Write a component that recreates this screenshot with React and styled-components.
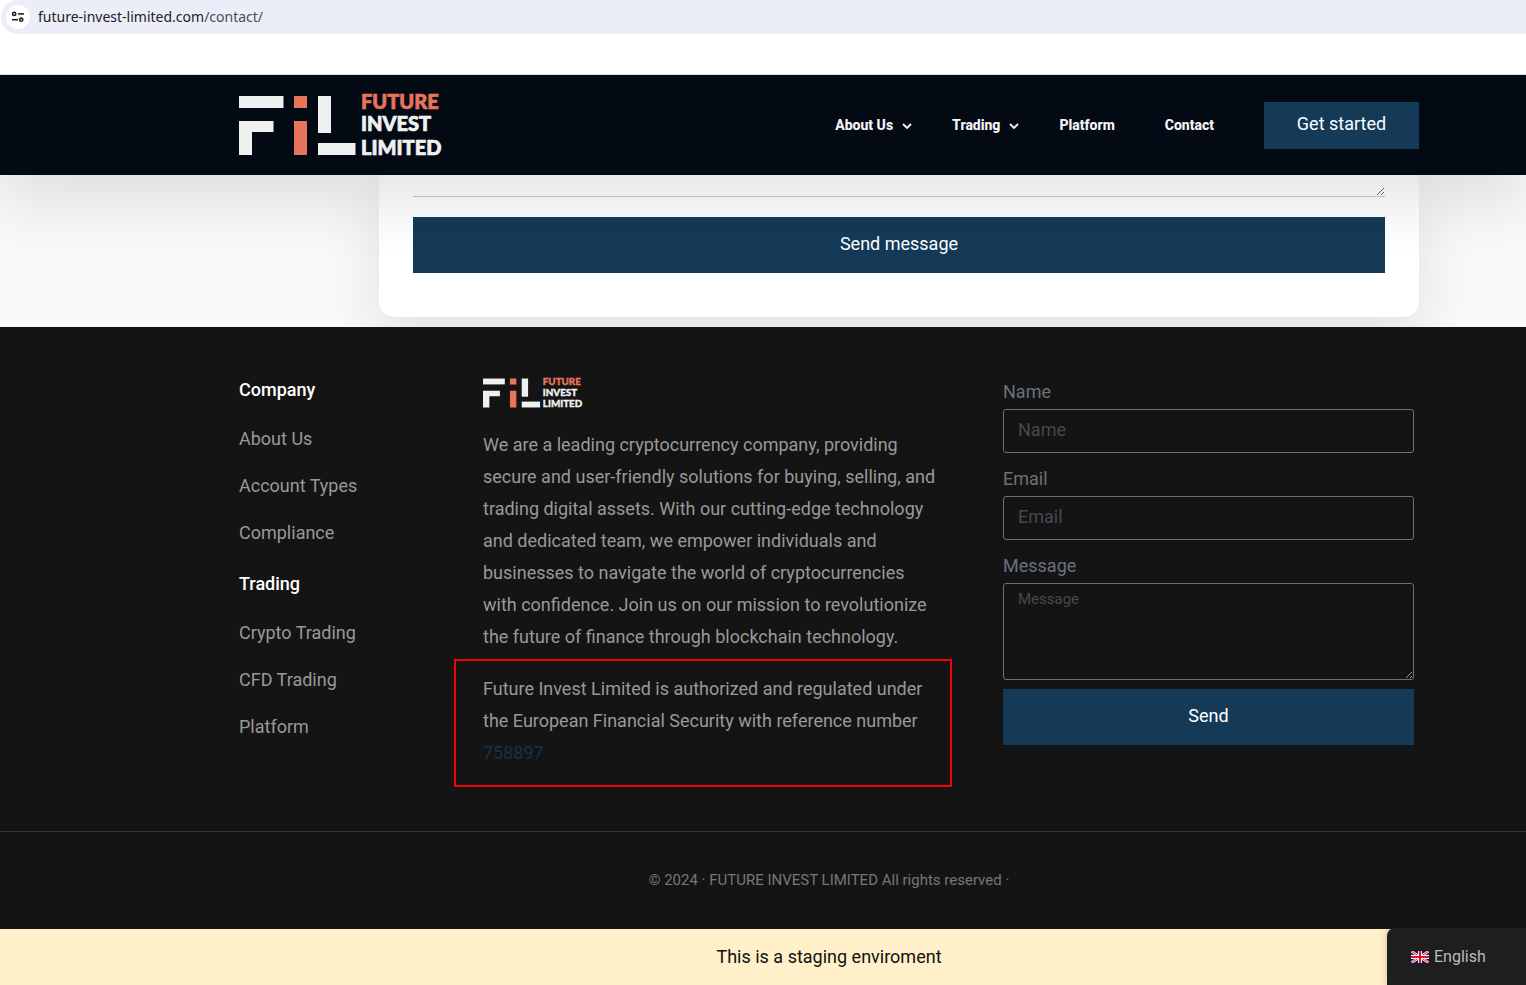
import React, { useState } from "react";
import styled, { createGlobalStyle } from "styled-components";

const GlobalStyle = createGlobalStyle`
  *, *::before, *::after {
    box-sizing: border-box;
  }

  body {
    margin: 0;
    background-color: #fff;
    font-family: Roboto, "Liberation Sans", sans-serif;
    font-size: 18px;
  }

  button, input, textarea {
    font-family: inherit;
  }
`;

const AddressBar = styled.div`
  display: flex;
  align-items: center;
  gap: 8px;
  height: 34px;
  margin: 0 0 40px 1px;
  padding-left: 5px;
  border-radius: 17px 0 0 17px;
  background-color: #ebeef8;
`;

const SiteInfoButton = styled.button`
  display: flex;
  align-items: center;
  justify-content: center;
  width: 24px;
  height: 24px;
  padding: 0;
  border: none;
  border-radius: 50%;
  background-color: #fff;
  color: #1f2023;
`;

const Address = styled.span`
  font-family: "Noto Sans", "Open Sans", sans-serif;
  font-size: 14px;
  line-height: 20px;
  color: #1f2023;
`;

const AddressPath = styled.span`
  color: #4a4d55;
`;

const Container = styled.div`
  padding: 0 107px 0 239px;

  @media (max-width: 1100px) {
    padding: 0 30px;
  }
`;

const Header = styled.header`
  position: relative;
  z-index: 1;
  border-top: 1px solid #dcdee0;
  background: #030a14 padding-box;
  box-shadow: 0 30px 60px rgba(0, 0, 0, 0.1);
  clip-path: inset(0 0 -120px 0);
`;

const HeaderRow = styled(Container)`
  display: flex;
  align-items: center;
  justify-content: space-between;
  height: 100px;
`;

const LogoSvg = styled.svg`
  display: block;
  overflow: visible;
  width: ${(props) => (props.$small ? "100px" : "204px")};
  height: ${(props) => (props.$small ? "32px" : "65px")};
`;

const Nav = styled.nav`
  display: flex;
  align-items: center;
  gap: 40px;
`;

const NavLink = styled.a`
  display: flex;
  align-items: center;
  gap: 9px;
  padding-right: ${(props) => (props.$hasMenu ? "0" : "10px")};
  font-size: 14px;
  line-height: 20px;
  font-weight: 800;
  color: #f5f5f5;
  text-decoration: none;
`;

const Button = styled.button`
  display: block;
  width: ${(props) => (props.$compact ? "155px" : "100%")};
  height: ${(props) => (props.$compact ? "47px" : "56px")};
  padding: 0 0 2px;
  border: none;
  background-color: #143a57;
  color: #fff;
  font-size: 18px;
  line-height: 24px;
  cursor: pointer;
`;

const ContactSection = styled(Container).attrs({ as: "main" })`
  padding-bottom: 10px;
  background-color: #f9f9f9;
  overflow: hidden;
`;

const ContactCard = styled.form`
  margin-left: 140px;
  padding: 0 34px 44px;
  border-radius: 0 0 15px 15px;
  background-color: #fff;
  box-shadow: 0 20px 60px rgba(0, 0, 0, 0.1);

  @media (max-width: 1100px) {
    margin-left: 0;
  }
`;

const LineTextarea = styled.textarea`
  display: block;
  width: 100%;
  height: 22px;
  margin-bottom: 20px;
  padding: 0;
  border: none;
  border-bottom: 1px solid #c8c8c8;
  background: transparent;
  overflow: hidden;
  resize: vertical;
  outline: none;
`;

const Footer = styled.footer`
  background-color: #141414;
`;

const FooterColumns = styled(Container)`
  display: grid;
  grid-template-columns: 244px minmax(0, 1fr) 411px;
  padding-top: 48px;
  padding-right: 112px;
  padding-bottom: 62px;

  @media (max-width: 1100px) {
    grid-template-columns: 1fr;
    gap: 30px;
    padding: 40px 30px;
  }
`;

const FooterHeading = styled.h4`
  margin: 0;
  font-size: 18px;
  line-height: 30px;
  font-weight: 500;
  color: #fff;
`;

const LinkList = styled.ul`
  display: flex;
  flex-direction: column;
  gap: 15px;
  margin: 0;
  padding: 18px 0 20px;
  list-style: none;
`;

const FooterLink = styled.a`
  display: block;
  line-height: 32px;
  color: #999;
  text-decoration: none;
`;

const About = styled.div`
  padding-top: 2px;
`;

const AboutText = styled.p`
  max-width: 455px;
  margin: 20px 0 0;
  line-height: 32px;
  color: #999;
`;

const Regulation = styled.div`
  position: relative;
  max-width: 455px;
  margin-top: 20px;
  line-height: 32px;
  color: #999;

  /* red frame around the licence note */
  &::after {
    content: "";
    position: absolute;
    inset: -14px -14px -18px -29px;
    border: 2px solid #f00505;
    pointer-events: none;
  }
`;

const ReferenceLink = styled.a`
  color: #17334a;
  text-decoration: none;
`;

const FooterForm = styled.form`
  display: flex;
  flex-direction: column;
  gap: 9px;
`;

const Field = styled.div`
  display: flex;
  flex-direction: column;
`;

const Label = styled.label`
  line-height: 34px;
  color: #69727d;
`;

const Input = styled.input`
  width: 100%;
  height: 44px;
  padding: 0 14px 3px;
  border: 1px solid #69727d;
  border-radius: 3px;
  background: transparent;
  color: #999;
  font-size: 18px;

  &::placeholder {
    color: #444a50;
  }
`;

const Textarea = styled.textarea`
  display: block;
  width: 100%;
  height: 97px;
  padding: 5px 14px;
  border: 1px solid #69727d;
  border-radius: 3px;
  background: transparent;
  color: #999;
  font-size: 15px;
  line-height: 20px;
  resize: vertical;

  &::placeholder {
    color: #444a50;
  }
`;

const Copyright = styled(Container)`
  padding-top: 33px;
  padding-bottom: 33px;
  border-top: 1px solid #32363a;
  font-size: 15px;
  line-height: 31px;
  text-align: center;
  color: #777;
`;

const StagingBar = styled(Container)`
  position: relative;
  background-color: #fff0c9;
  color: #111;
  line-height: 56px;
  text-align: center;
`;

const LanguageButton = styled.button`
  position: absolute;
  right: 0;
  bottom: 0;
  display: flex;
  align-items: center;
  gap: 5px;
  width: 139px;
  height: 57px;
  padding: 0 0 0 24px;
  border: none;
  border-radius: 8px 0 0 0;
  background-color: #1e1e1e;
  box-shadow: 0 0 8px rgba(0, 0, 0, 0.2);
  color: #bbb;
  font-size: 16px;
  line-height: 20px;
`;

const companyLinks = ["About Us", "Account Types", "Compliance"];
const tradingLinks = ["Crypto Trading", "CFD Trading", "Platform"];

const navItems = [
  { label: "About Us", hasMenu: true },
  { label: "Trading", hasMenu: true },
  { label: "Platform" },
  { label: "Contact" },
];

function Logo({ small }) {
  return (
    <LogoSvg $small={small} viewBox="0 -2 204 65" role="img" aria-label="Future Invest Limited">
      <g fill="#eff1f0">
        <path d="M0 1h44.5v12H0z" />
        <path d="M0 26h34.5v11H13v23H0z" />
        <path d="M79 1h13v37H79z" />
        <path d="M79 48h37.5v12H79z" />
      </g>
      <path d="M55 1h13v12H55zM55 26h13v34H55z" fill="#e9745c" />
      <g
        fontFamily="Lato, sans-serif"
        fontWeight="900"
        fontSize="20"
        fill="#eff1f0"
        stroke="#eff1f0"
        strokeWidth="0.7"
      >
        <text x="122" y="14" fill="#e9745c" stroke="#e9745c">FUTURE</text>
        <text x="122" y="36">INVEST</text>
        <text x="122" y="60">LIMITED</text>
      </g>
    </LogoSvg>
  );
}

function TuneIcon() {
  return (
    <svg width="14" height="12" viewBox="0 0 14 12" fill="none" stroke="currentColor" strokeWidth="1.6">
      <circle cx="3.2" cy="2.9" r="1.6" />
      <path d="M7 2.9h6" />
      <circle cx="10.2" cy="8.7" r="1.6" />
      <path d="M1 8.7h6" />
    </svg>
  );
}

function Chevron() {
  return (
    <svg width="10" height="8" viewBox="0 0 10 8" fill="none" stroke="currentColor" strokeWidth="1.8">
      <path d="M1 3l4 4 4-4" />
    </svg>
  );
}

function BritishFlag() {
  return (
    <svg width="18" height="12" viewBox="0 0 18 12">
      <path fill="#0b1680" d="M0 0h18v12H0z" />
      <path stroke="#fff" strokeWidth="2.6" d="M0 0l18 12M18 0L0 12" />
      <path stroke="#e0141e" strokeWidth="1" d="M0 0l18 12M18 0L0 12" />
      <path stroke="#fff" strokeWidth="4" d="M9 0v12M0 6h18" />
      <path stroke="#e8101c" strokeWidth="2.2" d="M9 0v12M0 6h18" />
    </svg>
  );
}

function FooterLinks({ title, links }) {
  return (
    <>
      <FooterHeading>{title}</FooterHeading>
      <LinkList>
        {links.map((link) => (
          <li key={link}>
            <FooterLink href="#">{link}</FooterLink>
          </li>
        ))}
      </LinkList>
    </>
  );
}

export default function ContactPage() {
  const [form, setForm] = useState({ name: "", email: "", message: "" });

  const handleChange = (e) => {
    setForm({ ...form, [e.target.name]: e.target.value });
  };

  const handleSubmit = (e) => {
    e.preventDefault();
  };

  return (
    <>
      <GlobalStyle />

      <AddressBar>
        <SiteInfoButton aria-label="View site information">
          <TuneIcon />
        </SiteInfoButton>
        <Address>
          future-invest-limited.com<AddressPath>/contact/</AddressPath>
        </Address>
      </AddressBar>

      <Header>
        <HeaderRow>
          <Logo />
          <Nav>
            {navItems.map((item) => (
              <NavLink key={item.label} href="#" $hasMenu={item.hasMenu}>
                {item.label}
                {item.hasMenu && <Chevron />}
              </NavLink>
            ))}
            <Button type="button" $compact>Get started</Button>
          </Nav>
        </HeaderRow>
      </Header>

      <ContactSection>
        <ContactCard onSubmit={handleSubmit}>
          <LineTextarea aria-label="Your message" />
          <Button type="submit">Send message</Button>
        </ContactCard>
      </ContactSection>

      <Footer>
        <FooterColumns>
          <div>
            <FooterLinks title="Company" links={companyLinks} />
            <FooterLinks title="Trading" links={tradingLinks} />
          </div>

          <About>
            <Logo small />
            <AboutText>
              We are a leading cryptocurrency company, providing secure and user-friendly solutions for
              buying, selling, and trading digital assets. With our cutting-edge technology and dedicated
              team, we empower individuals and businesses to navigate the world of cryptocurrencies with
              confidence. Join us on our mission to revolutionize the future of finance through blockchain
              technology.
            </AboutText>
            <Regulation>
              Future Invest Limited is authorized and regulated under the European Financial Security with
              reference number <ReferenceLink href="#">758897</ReferenceLink>
            </Regulation>
          </About>

          <FooterForm onSubmit={handleSubmit}>
            <Field>
              <Label htmlFor="name">Name</Label>
              <Input id="name" name="name" placeholder="Name" value={form.name} onChange={handleChange} />
            </Field>
            <Field>
              <Label htmlFor="email">Email</Label>
              <Input id="email" name="email" type="email" placeholder="Email" value={form.email} onChange={handleChange} />
            </Field>
            <Field>
              <Label htmlFor="message">Message</Label>
              <Textarea id="message" name="message" placeholder="Message" value={form.message} onChange={handleChange} />
            </Field>
            <Button type="submit">Send</Button>
          </FooterForm>
        </FooterColumns>

        <Copyright>© 2024 · FUTURE INVEST LIMITED All rights reserved ·</Copyright>
      </Footer>

      <StagingBar>
        This is a staging enviroment
        <LanguageButton type="button">
          <BritishFlag />
          English
        </LanguageButton>
      </StagingBar>
    </>
  );
}
